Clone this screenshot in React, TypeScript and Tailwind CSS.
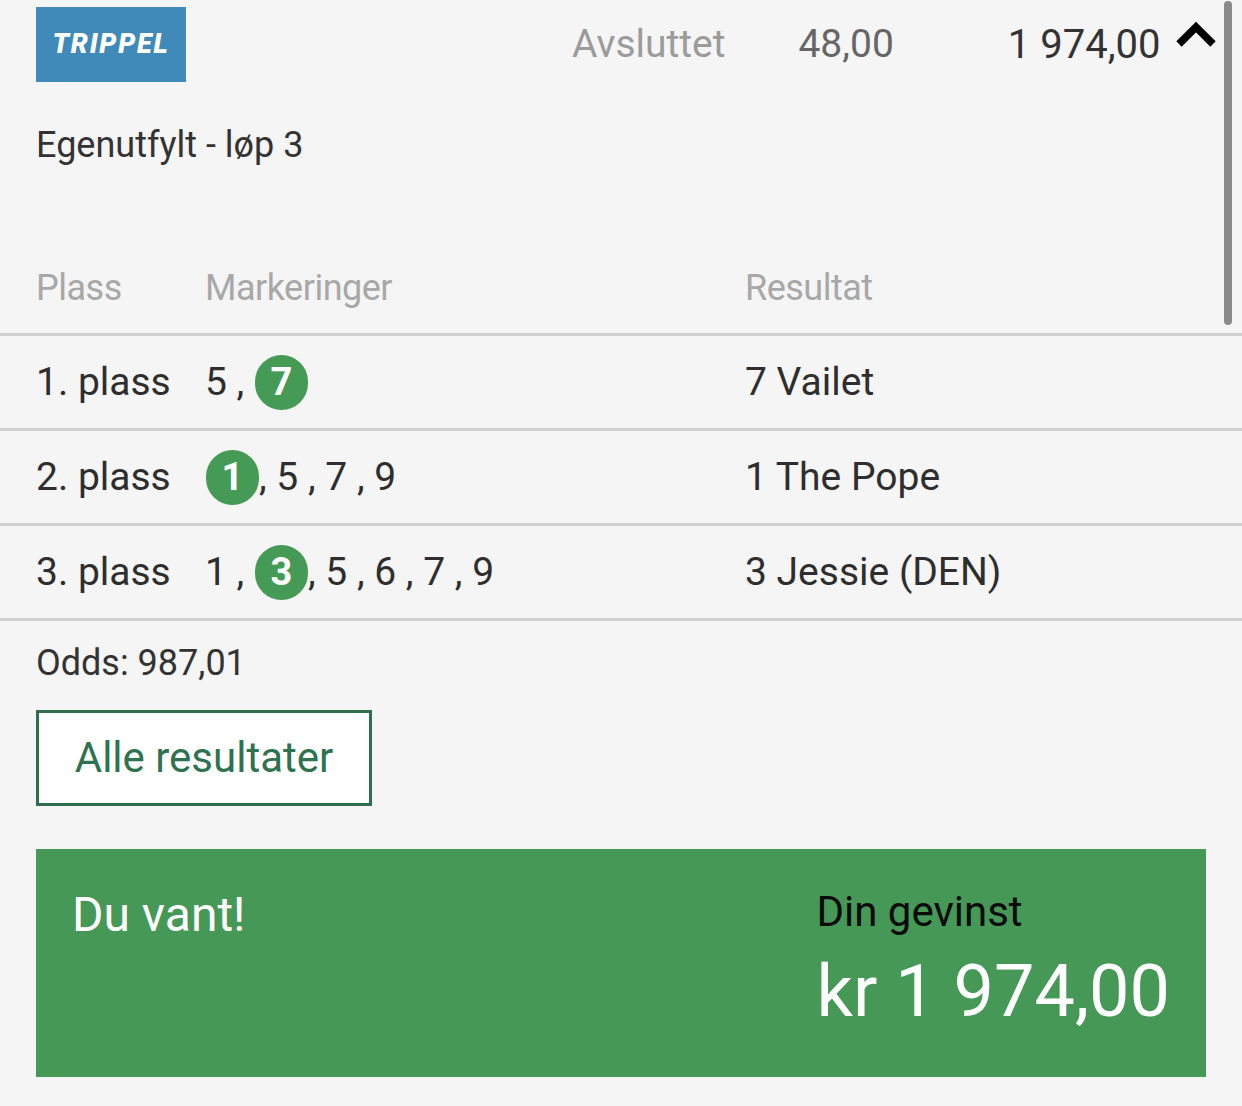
import React, { Fragment } from "react";

type Mark = { n: number; hit?: boolean };
type Row = { p: string; m: Mark[]; r: string };

const rows: Row[] = [
  { p: "1. plass", m: [{ n: 5 }, { n: 7, hit: true }], r: "7 Vailet" },
  { p: "2. plass", m: [{ n: 1, hit: true }, { n: 5 }, { n: 7 }, { n: 9 }], r: "1 The Pope" },
  {
    p: "3. plass",
    m: [{ n: 1 }, { n: 3, hit: true }, { n: 5 }, { n: 6 }, { n: 7 }, { n: 9 }],
    r: "3 Jessie (DEN)",
  },
];

function Marks({ m }: { m: Mark[] }) {
  return (
    <div className="flex items-center whitespace-pre">
      {m.map((it, i) => (
        <Fragment key={i}>
          {it.hit ? (
            <span className="ml-[1px] flex h-[55px] w-[53px] items-center justify-center rounded-full bg-[#459a55] text-[38px] font-bold leading-none text-white">
              {it.n}
            </span>
          ) : (
            <span>{`${it.n} `}</span>
          )}
          {i < m.length - 1 && <span>{", "}</span>}
        </Fragment>
      ))}
    </div>
  );
}

export default function App() {
  return (
    <div className="relative h-[1106px] w-[1242px] overflow-hidden bg-[#f5f5f5] font-[Roboto,sans-serif]">
      {/* scrollbar */}
      <div className="absolute left-[1224px] top-[1px] h-[324px] w-[8px] rounded-full bg-[#8a8a8a]" />

      {/* top row */}
      <div className="flex h-[82px] items-center pl-[36px] pt-[7px]">
        <div className="flex h-[75px] w-[150px] items-center justify-center bg-[#3f8ab8] text-[27px] font-black italic leading-none tracking-[1.8px] text-white">
          TRIPPEL
        </div>
        <div className="ml-[386px] text-[39px] leading-none text-[#9b9b9b]">Avsluttet</div>
        <div className="ml-[73px] text-[39px] leading-none text-[#666666]">48,00</div>
        <div className="ml-[114px] text-[40px] leading-none text-[#333333]">1 974,00</div>
        <svg
          className="ml-[15px] mt-[13px] self-start"
          width="40"
          height="28"
          viewBox="0 0 40 28"
          fill="none"
        >
          <polyline points="3,24 20,7 37,24" stroke="#000" strokeWidth="7.5" strokeLinejoin="miter" />
        </svg>
      </div>

      {/* subtitle */}
      <div className="mt-[45px] pl-[36px] text-[36px] leading-none text-[#333333]">Egenutfylt - løp 3</div>

      {/* table */}
      <div className="mt-[107px]">
        <div className="flex h-[66px] items-start border-b-[3px] border-[#d0d0d0] pl-[36px] text-[36px] leading-none tracking-[-0.5px] text-[#a8a8a8]">
          <div className="w-[169px]">Plass</div>
          <div className="w-[540px]">Markeringer</div>
          <div>Resultat</div>
        </div>
        {rows.map((row) => (
          <div
            key={row.p}
            className="flex h-[95px] items-center border-b-[3px] border-[#d0d0d0] pl-[36px] text-[39px] leading-none text-[#2e2e2e]"
          >
            <div className="w-[169px]">{row.p}</div>
            <div className="w-[540px]">
              <Marks m={row.m} />
            </div>
            <div>{row.r}</div>
          </div>
        ))}
      </div>

      {/* odds */}
      <div className="mt-[24px] pl-[36px] text-[36px] leading-none text-[#333333]">Odds: 987,01</div>

      {/* button */}
      <button className="ml-[36px] mt-[29px] flex h-[96px] w-[336px] items-center justify-center border-[3px] border-[#2f6e4e] bg-white text-[42px] leading-none text-[#2e7250]">
        Alle resultater
      </button>

      {/* win panel */}
      <div className="mx-[36px] mt-[43px] flex h-[228px] justify-between bg-[#469856] pl-[36px] pr-[36px] pt-[42px]">
        <div className="text-[48px] leading-none text-white">Du vant!</div>
        <div className="flex flex-col">
          <div className="text-[42px] leading-none text-[#0a0a0a]">Din gevinst</div>
          <div className="mt-[23px] text-[72px] leading-none text-white">kr 1 974,00</div>
        </div>
      </div>
    </div>
  );
}
